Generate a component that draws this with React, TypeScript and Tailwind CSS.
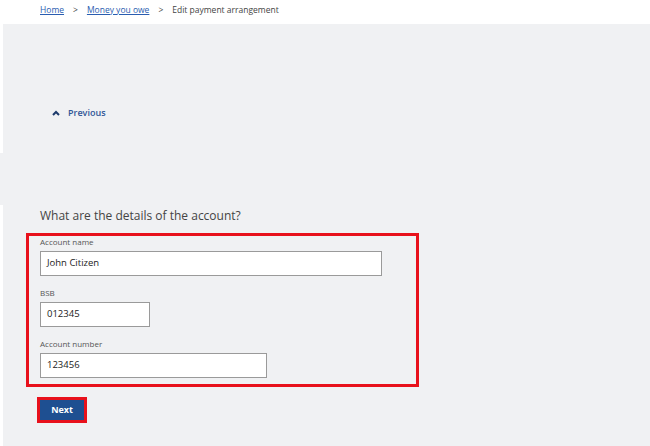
export default function App() {
  const font = { fontFamily: '"Open Sans", "Noto Sans", sans-serif' };
  return (
    <div className="w-[650px] h-[446px] bg-white overflow-hidden text-[#333]" style={font}>
      <nav className="h-[24px] flex items-center pl-[40px] text-[8.5px] leading-[12px] pb-[5px] text-[#444]">
        <a className="text-[#2a5db0] underline">Home</a>
        <span className="mx-[9px]">&gt;</span>
        <a className="text-[#2a5db0] underline">Money you owe</a>
        <span className="mx-[9px]">&gt;</span>
        <span>Edit payment arrangement</span>
      </nav>
      <div className="ml-[3px] h-[129px] bg-[#f0f1f3] pt-[82px] pl-[48px]">
        <div className="flex items-center h-[14px] gap-[8px]">
          <svg width="8" height="6" viewBox="0 0 8 6" className="ml-[1px]">
            <path d="M1 5 L4 2 L7 5" fill="none" stroke="#1d3a6b" strokeWidth="2" />
          </svg>
          <span className="text-[9px] font-semibold text-[#2f5596]">Previous</span>
        </div>
      </div>
      <div className="h-[52px] bg-[#f0f1f3]" />
      <div className="ml-[3px] h-[241px] bg-[#f0f1f3] pt-[1px]">
        <h2 className="pl-[37px] text-[12px] leading-[20px] text-[#444]">What are the details of the account?</h2>
        <div className="ml-[23px] mt-[7px] w-[393px] border-[3px] border-[#e8111b] pl-[11px] pb-[6px]">
          <label className="block text-[8px] leading-[12px] text-[#555] mb-[3px]">Account name</label>
          <div className="w-[342px] h-[25px] bg-white border border-[#9a9a9a] flex items-center pl-[6px] text-[9.5px] text-[#222]">John Citizen</div>
          <label className="block text-[8px] leading-[12px] text-[#555] mt-[11px] mb-[3px]">BSB</label>
          <div className="w-[110px] h-[25px] bg-white border border-[#9a9a9a] flex items-center pl-[6px] text-[9.5px] text-[#222]">012345</div>
          <label className="block text-[8px] leading-[12px] text-[#555] mt-[11px] mb-[3px]">Account number</label>
          <div className="w-[227px] h-[25px] bg-white border border-[#9a9a9a] flex items-center pl-[6px] text-[9.5px] text-[#222]">123456</div>
        </div>
        <div className="ml-[34px] mt-[10px] w-[50px] h-[26px] border-[3px] border-[#e8111b] bg-[#1e4f91] flex items-center justify-center text-white text-[9px] font-bold">
          Next
        </div>
      </div>
    </div>
  );
}
